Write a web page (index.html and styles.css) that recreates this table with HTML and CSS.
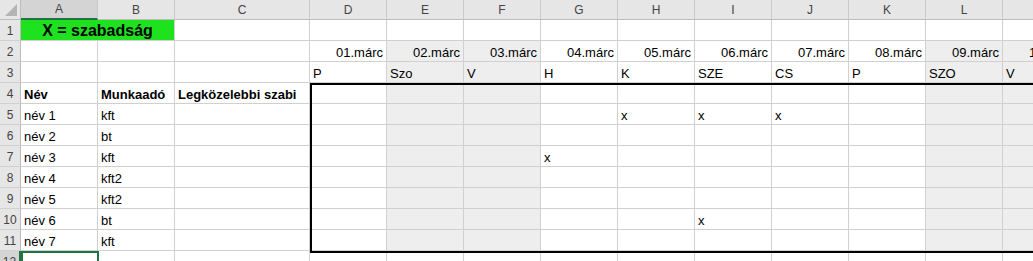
FILE: index.html
```html
<!DOCTYPE html>
<html lang="hu">
<head>
    <meta charset="UTF-8">
    <title>Szabadság tábla</title>
    <link rel="stylesheet" href="styles.css">
</head>
<body>
    <!-- Munkalap: fejlécek + cellák, a script tölti fel -->
    <div class="sheet" id="sheet">
        <div class="corner">
            <svg width="12" height="12" viewBox="0 0 12 12"><polygon points="12,0 12,12 0,12" fill="#b4b4b4"/></svg>
        </div>
    </div>

    <script>
        const cols = ['A', 'B', 'C', 'D', 'E', 'F', 'G', 'H', 'I', 'J', 'K', 'L', 'M'];
        const weekend = ['E', 'F', 'L', 'M']; // szürke oszlopok
        const days = ['P', 'Szo', 'V', 'H', 'K', 'SZE', 'CS', 'P', 'SZO', 'V'];
        const people = [
            ['név 1', 'kft'], ['név 2', 'bt'], ['név 3', 'kft'], ['név 4', 'kft2'],
            ['név 5', 'kft2'], ['név 6', 'bt'], ['név 7', 'kft']
        ];
        // sor -> oszlopok, ahol szabadság van
        const marks = { 5: ['H', 'I', 'J'], 7: ['G'], 10: ['I'] };

        const sheet = document.getElementById('sheet');

        function addCell(text, classes) {
            const el = document.createElement('div');
            el.className = classes;
            el.textContent = text;
            sheet.appendChild(el);
            return el;
        }

        // Oszlopfejlécek
        cols.forEach(c => addCell(c, 'col-head' + (c === 'A' ? ' active' : '')));

        for (let r = 1; r <= 12; r++) {
            addCell(r, 'row-head' + (r === 12 ? ' active' : ''));

            cols.forEach((c, i) => {
                if (r === 1 && c === 'B') return; // A1:B1 össze van vonva
                let text = '';
                let cls = 'cell';
                if (r >= 2 && r <= 11 && weekend.includes(c)) cls += ' weekend';

                if (r === 1 && c === 'A') {
                    text = 'X = szabadság';
                    cls += ' legend';
                } else if (r === 2 && i >= 3) {
                    text = String(i - 2).padStart(2, '0') + '.márc';
                    cls += ' num';
                } else if (r === 3 && i >= 3) {
                    text = days[i - 3];
                } else if (r === 4 && i < 3) {
                    text = ['Név', 'Munkaadó', 'Legközelebbi szabi'][i];
                    cls += ' bold';
                } else if (r >= 5 && r <= 11 && i < 2) {
                    text = people[r - 5][i];
                } else if (marks[r] && marks[r].includes(c)) {
                    text = 'x';
                }
                addCell(text, cls);
            });
        }

        // Vastag keret a naptár körül, és a kijelölt cella (A12)
        addCell('', 'frame');
        addCell('', 'cursor');
    </script>
</body>
</html>
```

FILE: styles.css
```css
/* Alap */
body {
    margin: 0;
    background-color: #ffffff;
    font-family: "Liberation Sans", Arial, sans-serif;
    overflow: hidden;
}

/* Munkalap rács */
.sheet {
    display: grid;
    grid-template-columns: 21px 77px 77px 135px repeat(10, 77px);
    grid-template-rows: 20px repeat(12, 21px);
    width: max-content;
    position: relative;
}
.sheet > div {
    box-sizing: border-box;
    white-space: nowrap;
    overflow: hidden;
}

/* Bal felső sarok */
.corner {
    background-color: #e6e6e6;
    border-right: 1px solid #bcbcbc;
    border-bottom: 1px solid #bcbcbc;
    display: flex;
    align-items: flex-end;
    justify-content: flex-end;
    padding: 0 3px 3px 0;
}

/* Fejlécek */
.col-head,
.row-head {
    background-color: #e6e6e6;
    color: #444;
    font-size: 12px;
    text-align: center;
}
.col-head {
    line-height: 20px;
    border-right: 1px solid #cacaca;
    border-bottom: 1px solid #bcbcbc;
}
.row-head {
    line-height: 22px;
    border-right: 1px solid #bcbcbc;
    border-bottom: 1px solid #d0d0d0;
}
.col-head.active {
    background-color: #d4d4d4;
    border-bottom: 2px solid #217346;
    line-height: 19px;
}
.row-head.active {
    background-color: #d4d4d4;
    border-right: 2px solid #217346;
}

/* Cellák */
.cell {
    font-size: 13px;
    line-height: 20px;
    padding: 2px 3px 0;
    color: #000;
    border-right: 1px solid #d0d0d0;
    border-bottom: 1px solid #d0d0d0;
}
.cell.weekend {
    background-color: #eeeeee;
}
.cell.num {
    text-align: right;
}
.cell.bold {
    font-weight: bold;
}
.cell.legend {
    grid-column: span 2;
    padding-top: 1px;
    background-color: #1fe21f;
    font-size: 16px;
    font-weight: bold;
    text-align: center;
}

/* Keret D4-től jobbra, és a kijelölés */
.frame {
    position: absolute;
    grid-column: 5 / -1;
    grid-row: 5 / 13;
    top: 0;
    left: 0;
    right: 0;
    bottom: -2px;
    border: 2px solid #000;
}
.cursor {
    position: absolute;
    grid-column: 2 / 3;
    grid-row: 13 / 14;
    top: 0;
    left: 0;
    right: -1px;
    bottom: 0;
    border: 2px solid #217346;
}
```
